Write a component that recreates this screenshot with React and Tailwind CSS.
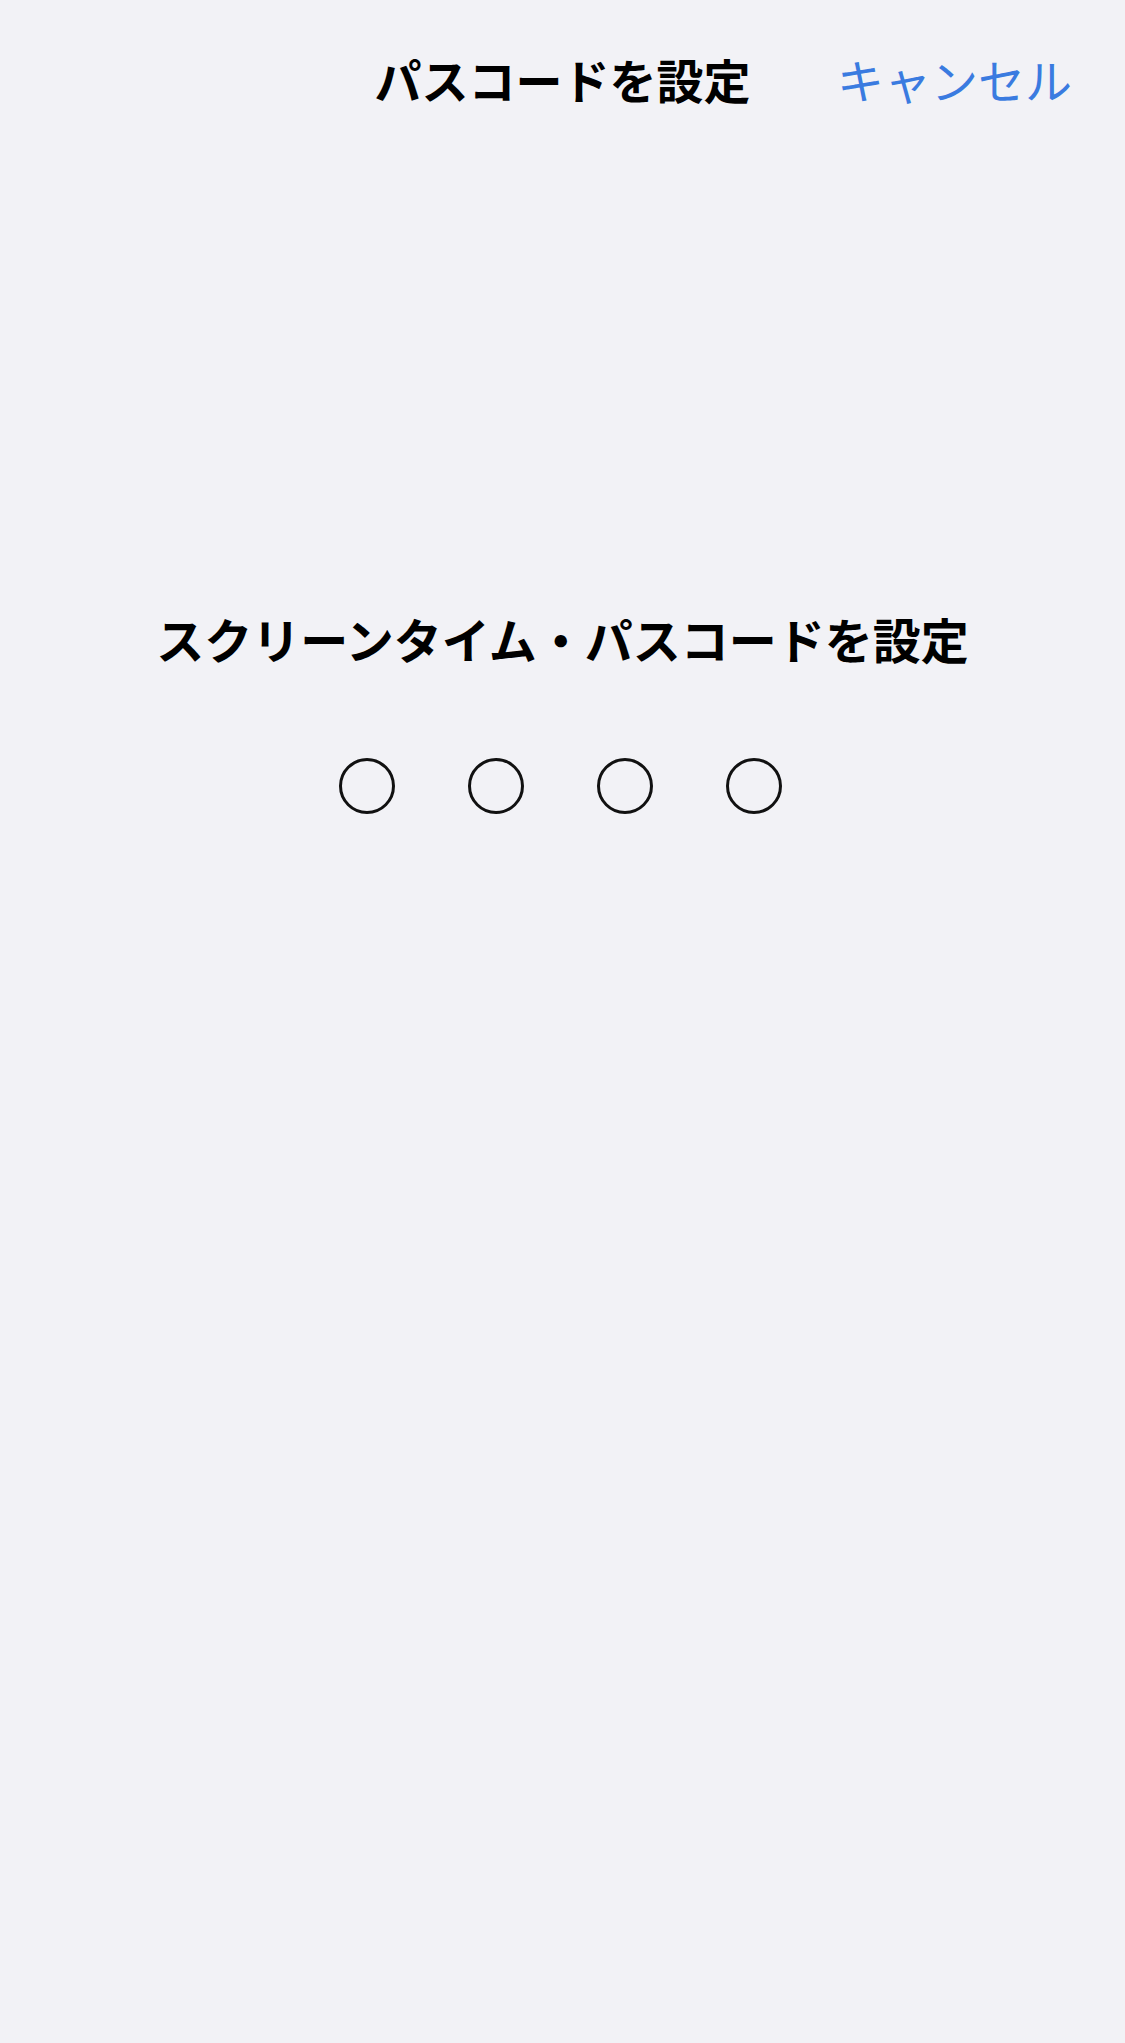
import React from "react";

const font = { fontFamily: '"Noto Sans CJK JP", "Noto Sans", sans-serif' };

export default function App() {
  return (
    <div
      className="w-[1125px] h-[2043px] bg-[#f2f2f6] flex flex-col"
      style={font}
    >
      <div className="h-[157px] grid grid-cols-[1fr_auto_1fr] items-center">
        <div />
        <div className="text-[47px] leading-[56px] font-bold text-black">
          パスコードを設定
        </div>
        <div className="flex justify-end pr-[53px]">
          <span className="text-[47px] leading-[56px] font-normal text-[#3a7be0]">
            キャンセル
          </span>
        </div>
      </div>
      <div className="mt-[453px] text-center text-[48px] leading-[56px] font-bold text-black">
        スクリーンタイム・パスコードを設定
      </div>
      <div className="mt-[92px] flex justify-center gap-[73px] pr-[4px]">
        <div className="w-[56px] h-[56px] rounded-full border-[3px] border-[#111]" />
        <div className="w-[56px] h-[56px] rounded-full border-[3px] border-[#111]" />
        <div className="w-[56px] h-[56px] rounded-full border-[3px] border-[#111]" />
        <div className="w-[56px] h-[56px] rounded-full border-[3px] border-[#111]" />
      </div>
    </div>
  );
}
